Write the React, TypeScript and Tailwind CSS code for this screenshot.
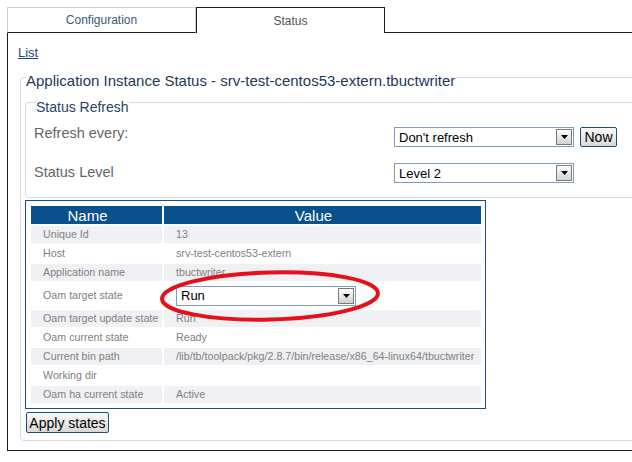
const rows = [
  { name: 'Unique Id', value: '13' },
  { name: 'Host', value: 'srv-test-centos53-extern' },
  { name: 'Application name', value: 'tbuctwriter' },
  { name: 'Oam target state', value: 'Run', select: true },
  { name: 'Oam target update state', value: 'Run' },
  { name: 'Oam current state', value: 'Ready' },
  { name: 'Current bin path', value: '/lib/tb/toolpack/pkg/2.8.7/bin/release/x86_64-linux64/tbuctwriter' },
  { name: 'Working dir', value: '' },
  { name: 'Oam ha current state', value: 'Active' },
];

function Select({ value }: { value: string }) {
  return (
    <div className="flex h-[20px] w-[180px] shrink-0 items-center justify-between border border-[#7f9db9] bg-white pl-[4px] pr-px text-[13px] leading-none text-black">
      <span>{value}</span>
      <span className="flex h-[16px] w-[16px] items-end justify-center border border-[#7b7b7b] bg-linear-to-b from-white to-[#d2d2d2] pb-[5px]">
        <svg width="7" height="4" viewBox="0 0 7 4">
          <path d="M0 0h7L3.5 4z" fill="#000" />
        </svg>
      </span>
    </div>
  );
}

export default function App() {
  return (
    <div className="relative h-[462px] w-[632px] overflow-hidden bg-white pl-[7px] pt-[7px] font-['Liberation_Sans',Arial,sans-serif]">
      {/* Tabs */}
      <div className="flex h-[26px]">
        <div className="flex w-[189px] items-center justify-center border border-[#cfcfcf] border-b-[#1b1b1b] text-[12px] text-[#3d5a78]">
          Configuration
        </div>
        <div className="flex w-[189px] items-center justify-center border border-b-0 border-[#1b1b1b] text-[12px] text-[#555]">
          Status
        </div>
        <div className="flex-1 border-b border-[#1b1b1b]" />
      </div>

      {/* Panel */}
      <div className="h-[418px] border-b border-l border-[#1b1b1b] pl-[10px] pt-[12px]">
        <a className="block w-fit text-[13px] leading-[15px] text-[#1b4a84] underline">List</a>

        <fieldset className="ml-[2px] mt-[6px] w-[640px] rounded-[4px] border border-[#d3dce4] px-[4px] pb-[5px]">
          <legend className="ml-[1px] pt-[6px] text-[15px] leading-[17px] text-[#22395a]">
            Application Instance Status - srv-test-centos53-extern.tbuctwriter
          </legend>

          <fieldset className="rounded-[4px] border border-[#d3dce4] pb-[14px] pl-[8px]">
            <legend className="ml-[2px] pt-[10px] text-[14px] leading-[16px] text-[#2b3f63]">Status Refresh</legend>
            <div className="mt-[12px] flex items-start">
              <div className="-mt-[2px] w-[360px] text-[14.5px] leading-[17px] text-[#666]">Refresh every:</div>
              <Select value="Don't refresh" />
              <button className="ml-[6px] h-[20px] w-[37px] rounded-[2px] border border-[#1c4f80] bg-linear-to-b from-[#fafafa] to-[#d8d8d8] text-[14px] leading-none text-black">
                Now
              </button>
            </div>
            <div className="mt-[16px] flex items-start">
              <div className="mt-[1px] w-[360px] text-[14.5px] leading-[17px] text-[#666]">Status Level</div>
              <Select value="Level 2" />
            </div>
          </fieldset>

          {/* Status table */}
          <div className="mt-[2px] w-[461px] border border-[#1a4f7e] pb-[5px] pl-[5px] pr-[4px] pt-[5px]">
            <div className="grid grid-cols-[131px_317px] gap-[2px]">
              <div className="flex h-[18px] items-center justify-center bg-[#0a508a] pr-[18px] text-[15px] leading-none text-white">Name</div>
              <div className="flex h-[18px] items-center justify-center bg-[#0a508a] pr-[18px] text-[15px] leading-none text-white">Value</div>
              {rows.map((r, i) => (
                <div key={r.name} className="contents">
                  <div
                    className={`flex items-center whitespace-nowrap pl-[12px] text-[10.7px] text-[#808080] ${r.select ? 'h-[25px]' : 'h-[17px]'} ${i % 2 === 0 ? 'bg-[#f0f1f5]' : 'bg-white'}`}
                  >
                    {r.name}
                  </div>
                  <div
                    className={`flex items-center whitespace-nowrap pl-[12px] text-[10.7px] text-[#808080] ${r.select ? 'h-[25px]' : 'h-[17px]'} ${i % 2 === 0 ? 'bg-[#f0f1f5]' : 'bg-white'}`}
                  >
                    {r.select ? <Select value={r.value} /> : r.value}
                  </div>
                </div>
              ))}
            </div>
          </div>

          <button className="ml-[1px] mt-[3px] h-[21px] w-[83px] rounded-[2px] border border-[#1c4f80] bg-linear-to-b from-[#fafafa] to-[#d8d8d8] text-[14px] leading-none text-black">
            Apply states
          </button>
        </fieldset>
      </div>

      {/* Red highlight ellipse */}
      <svg className="absolute left-[157px] top-[268px]" width="226" height="56" viewBox="0 0 226 56">
        <ellipse cx="113" cy="28" rx="108" ry="23.5" fill="none" stroke="#e5101c" strokeWidth="4" transform="rotate(-1.5 113 28)" />
      </svg>
    </div>
  );
}
